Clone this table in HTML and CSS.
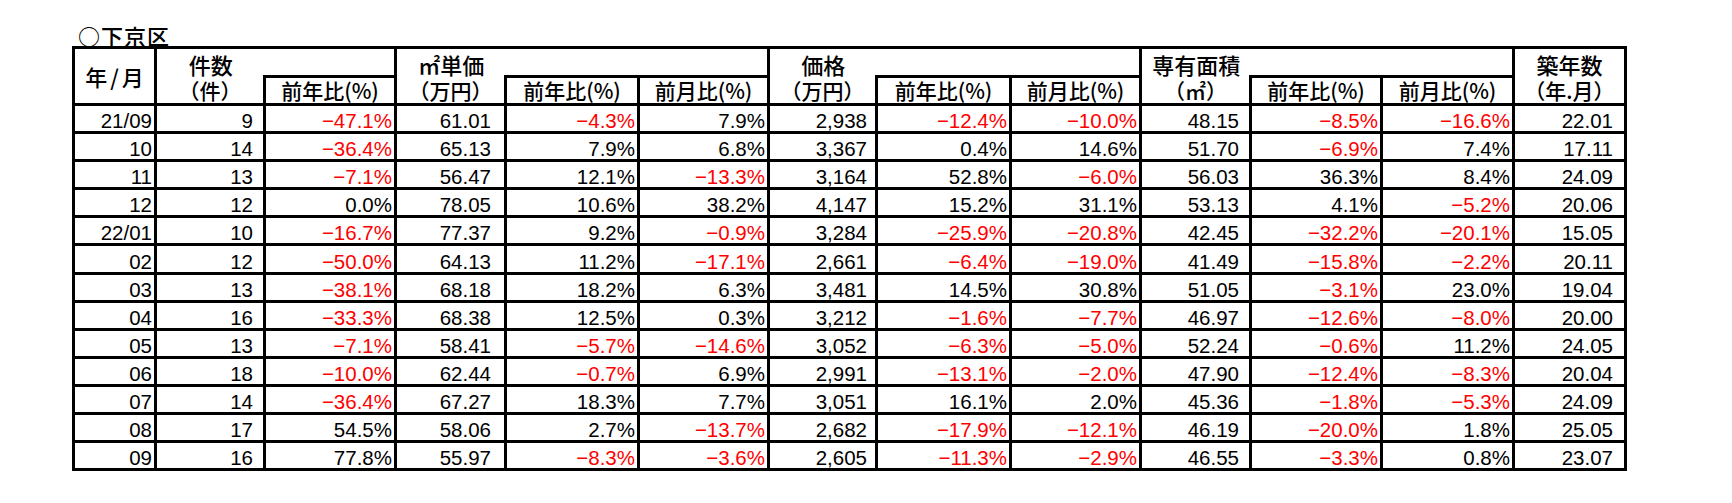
FILE: index.html
```html
<!DOCTYPE html>
<html lang="ja">
<head>
<meta charset="utf-8">
<title>下京区</title>
<link rel="stylesheet" href="styles.css">
</head>
<body>
<div class="sheet">
  <div class="title">○下京区</div>
  <table class="grid">
    <colgroup>
      <col class="c-ym"><col class="c-cnt"><col class="c-cy">
      <col class="c-unit"><col class="c-uy"><col class="c-um">
      <col class="c-price"><col class="c-py"><col class="c-pm">
      <col class="c-area"><col class="c-ay"><col class="c-am">
      <col class="c-age">
    </colgroup>
    <thead>
      <tr class="h1">
        <th rowspan="2" class="mid ym">年/月</th>
        <th class="nb nr">件数</th>
        <th class="nl"></th>
        <th class="nb nr">㎡単価</th>
        <th colspan="2" class="nl"></th>
        <th class="nb nr">価格</th>
        <th colspan="2" class="nl"></th>
        <th class="nb nr">専有面積</th>
        <th colspan="2" class="nl"></th>
        <th class="nb">築年数</th>
      </tr>
      <tr class="h2">
        <th class="nt">（件）</th>
        <th>前年比(%)</th>
        <th class="nt">（万円）</th>
        <th>前年比(%)</th>
        <th>前月比(%)</th>
        <th class="nt">（万円）</th>
        <th>前年比(%)</th>
        <th>前月比(%)</th>
        <th class="nt">（㎡）</th>
        <th>前年比(%)</th>
        <th>前月比(%)</th>
        <th class="nt">（年.月）</th>
      </tr>
    </thead>
    <tbody>
      <tr><td>21/09</td><td>9</td><td class="neg">−47.1%</td><td>61.01</td><td class="neg">−4.3%</td><td>7.9%</td><td>2,938</td><td class="neg">−12.4%</td><td class="neg">−10.0%</td><td>48.15</td><td class="neg">−8.5%</td><td class="neg">−16.6%</td><td>22.01</td></tr>
      <tr><td>10</td><td>14</td><td class="neg">−36.4%</td><td>65.13</td><td>7.9%</td><td>6.8%</td><td>3,367</td><td>0.4%</td><td>14.6%</td><td>51.70</td><td class="neg">−6.9%</td><td>7.4%</td><td>17.11</td></tr>
      <tr><td>11</td><td>13</td><td class="neg">−7.1%</td><td>56.47</td><td>12.1%</td><td class="neg">−13.3%</td><td>3,164</td><td>52.8%</td><td class="neg">−6.0%</td><td>56.03</td><td>36.3%</td><td>8.4%</td><td>24.09</td></tr>
      <tr><td>12</td><td>12</td><td>0.0%</td><td>78.05</td><td>10.6%</td><td>38.2%</td><td>4,147</td><td>15.2%</td><td>31.1%</td><td>53.13</td><td>4.1%</td><td class="neg">−5.2%</td><td>20.06</td></tr>
      <tr><td>22/01</td><td>10</td><td class="neg">−16.7%</td><td>77.37</td><td>9.2%</td><td class="neg">−0.9%</td><td>3,284</td><td class="neg">−25.9%</td><td class="neg">−20.8%</td><td>42.45</td><td class="neg">−32.2%</td><td class="neg">−20.1%</td><td>15.05</td></tr>
      <tr><td>02</td><td>12</td><td class="neg">−50.0%</td><td>64.13</td><td>11.2%</td><td class="neg">−17.1%</td><td>2,661</td><td class="neg">−6.4%</td><td class="neg">−19.0%</td><td>41.49</td><td class="neg">−15.8%</td><td class="neg">−2.2%</td><td>20.11</td></tr>
      <tr><td>03</td><td>13</td><td class="neg">−38.1%</td><td>68.18</td><td>18.2%</td><td>6.3%</td><td>3,481</td><td>14.5%</td><td>30.8%</td><td>51.05</td><td class="neg">−3.1%</td><td>23.0%</td><td>19.04</td></tr>
      <tr><td>04</td><td>16</td><td class="neg">−33.3%</td><td>68.38</td><td>12.5%</td><td>0.3%</td><td>3,212</td><td class="neg">−1.6%</td><td class="neg">−7.7%</td><td>46.97</td><td class="neg">−12.6%</td><td class="neg">−8.0%</td><td>20.00</td></tr>
      <tr><td>05</td><td>13</td><td class="neg">−7.1%</td><td>58.41</td><td class="neg">−5.7%</td><td class="neg">−14.6%</td><td>3,052</td><td class="neg">−6.3%</td><td class="neg">−5.0%</td><td>52.24</td><td class="neg">−0.6%</td><td>11.2%</td><td>24.05</td></tr>
      <tr><td>06</td><td>18</td><td class="neg">−10.0%</td><td>62.44</td><td class="neg">−0.7%</td><td>6.9%</td><td>2,991</td><td class="neg">−13.1%</td><td class="neg">−2.0%</td><td>47.90</td><td class="neg">−12.4%</td><td class="neg">−8.3%</td><td>20.04</td></tr>
      <tr><td>07</td><td>14</td><td class="neg">−36.4%</td><td>67.27</td><td>18.3%</td><td>7.7%</td><td>3,051</td><td>16.1%</td><td>2.0%</td><td>45.36</td><td class="neg">−1.8%</td><td class="neg">−5.3%</td><td>24.09</td></tr>
      <tr><td>08</td><td>17</td><td>54.5%</td><td>58.06</td><td>2.7%</td><td class="neg">−13.7%</td><td>2,682</td><td class="neg">−17.9%</td><td class="neg">−12.1%</td><td>46.19</td><td class="neg">−20.0%</td><td>1.8%</td><td>25.05</td></tr>
      <tr><td>09</td><td>16</td><td>77.8%</td><td>55.97</td><td class="neg">−8.3%</td><td class="neg">−3.6%</td><td>2,605</td><td class="neg">−11.3%</td><td class="neg">−2.9%</td><td>46.55</td><td class="neg">−3.3%</td><td>0.8%</td><td>23.07</td></tr>
    </tbody>
  </table>
</div>
</body>
</html>
```

FILE: styles.css
```css
html, body {
  margin: 0;
  padding: 0;
  background: #ffffff;
}

body {
  font-family: "Liberation Sans", "Noto Sans CJK JP", sans-serif;
  color: #000000;
}

.sheet {
  padding: 25px 0 0 72px;
}

.title {
  font-family: "Noto Sans CJK JP", sans-serif;
  font-weight: 500;
  font-size: 22px;
  line-height: 21px;
  height: 21px;
  letter-spacing: 1px;
  margin-left: 6px;
}

.grid {
  border-collapse: collapse;
  table-layout: fixed;
  width: 1555px;
}

.c-ym { width: 82px; }
.c-cnt { width: 109px; }
.c-cy { width: 131px; }
.c-unit { width: 110px; }
.c-uy { width: 133px; }
.c-um { width: 130px; }
.c-price { width: 108px; }
.c-py { width: 134px; }
.c-pm { width: 130px; }
.c-area { width: 110px; }
.c-ay { width: 131px; }
.c-am { width: 132px; }
.c-age { width: 112px; }

.grid th,
.grid td {
  border: 3px solid #000000;
  padding: 0 2px;
  white-space: nowrap;
}

.grid th {
  font-family: "Noto Sans CJK JP", sans-serif;
  font-weight: 500;
  font-size: 22px;
  line-height: 26px;
  text-align: center;
  vertical-align: bottom;
}

.grid .h2 th {
  font-size: 21px;
  line-height: 25px;
}

.grid th.mid {
  vertical-align: middle;
  font-size: 22px;
  line-height: 26px;
}

.grid th.ym {
  letter-spacing: 3px;
  text-indent: 3px;
}

.grid th.nb { border-bottom: none; }
.grid th.nt { border-top: none; }
.grid th.nr { border-right: none; }
.grid th.nl { border-left: none; }

.h1 { height: 29px; }
.h2 { height: 27px; }

.grid tbody tr { height: 28.1px; }

.grid td {
  font-size: 20.5px;
  line-height: 20px;
  text-align: right;
  vertical-align: bottom;
}

/* value columns carry extra space on the right, as in the sheet */
.grid td:nth-child(2) { padding-right: 10px; }
.grid td:nth-child(4) { padding-right: 13px; }
.grid td:nth-child(7) { padding-right: 8px; }
.grid td:nth-child(10) { padding-right: 10px; }
.grid td:nth-child(13) { padding-right: 11px; }

.grid td.neg {
  color: #ff0000;
}
```
